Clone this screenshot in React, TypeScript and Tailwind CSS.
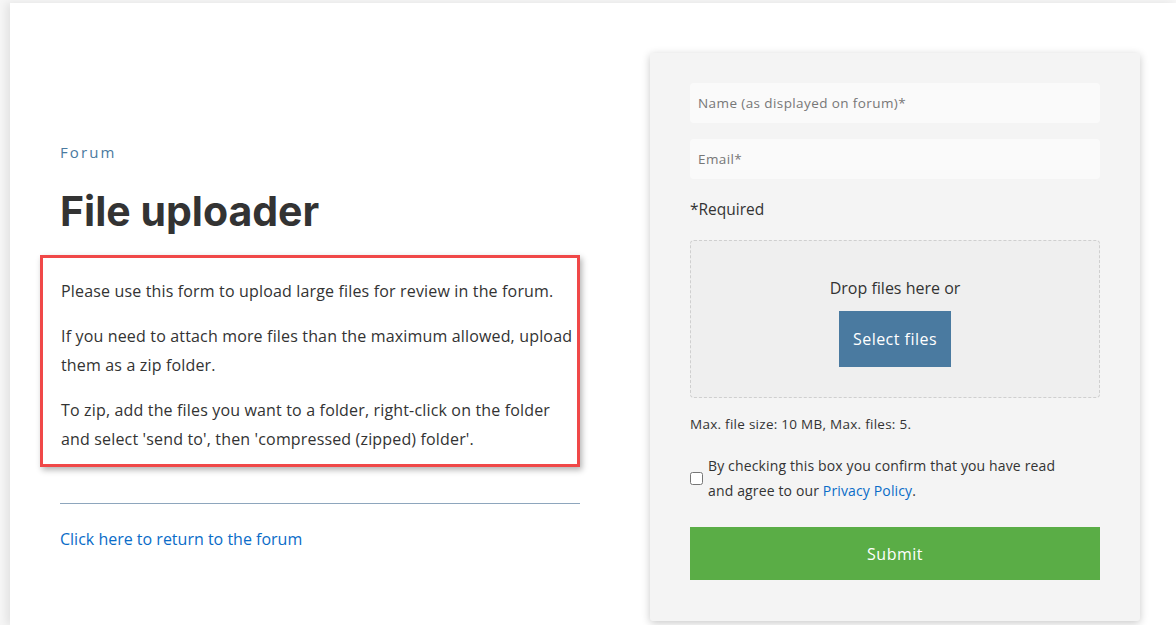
import { useState } from "react";

export default function App() {
  const [agreed, setAgreed] = useState(false);

  return (
    <div className="min-h-screen bg-[#f6f6f6] pt-[3px] pl-[10px] overflow-hidden font-['Open_Sans',sans-serif]">
      <div className="min-h-[622px] bg-white shadow-[-4px_0_8px_rgba(0,0,0,0.08)] flex items-start">
        {/* left column */}
        <div className="w-[640px] shrink-0 pl-[30px] pt-[138px]">
          <div className="pl-[20px] w-[550px]">
            <p className="text-[15px] tracking-[0.14em] text-[#4a7aa0] leading-[22px]">Forum</p>
            <h1 className="mt-[23px] text-[41px] leading-[50px] font-bold text-[#333] font-['Inter',sans-serif]">
              File uploader
            </h1>
          </div>

          <div className="mt-[19px] w-[540px] border-[3px] border-[#f04848] shadow-[2px_3px_6px_rgba(0,0,0,0.3)] pl-[18px] pr-1 pt-[19px] pb-[10px] text-[16px] leading-[29px] tracking-[0.01em] text-[#333] flex flex-col gap-[16px]">
            <p>Please use this form to upload large files for review in the forum.</p>
            <p>If you need to attach more files than the maximum allowed, upload them as a zip folder.</p>
            <p>To zip, add the files you want to a folder, right-click on the folder and select 'send to', then 'compressed (zipped) folder'.</p>
          </div>

          <div className="ml-[20px] w-[520px] mt-[36px] border-t border-[#8ea6bd]" />
          <a href="#" className="ml-[20px] mt-[24px] block text-[16px] leading-[22px] text-[#0a6cc8]">
            Click here to return to the forum
          </a>
        </div>

        {/* form card */}
        <div className="mt-[50px] w-[490px] shrink-0 bg-[#f4f4f4] rounded-[3px] shadow-[0_2px_8px_rgba(0,0,0,0.22)] px-[40px] pt-[30px] pb-[41px] flex flex-col">
          <input
            placeholder="Name (as displayed on forum)*"
            className="h-[40px] rounded-[4px] bg-[#fafafa] px-[8px] text-[13.5px] tracking-[0.03em] text-[#333] placeholder:text-[#777] outline-none"
          />
          <input
            placeholder="Email*"
            className="mt-[16px] h-[40px] rounded-[4px] bg-[#fafafa] px-[8px] text-[13.5px] tracking-[0.03em] text-[#333] placeholder:text-[#777] outline-none"
          />
          <p className="mt-[18px] text-[15.5px] leading-[24px] text-[#333]">*Required</p>

          <div className="mt-[19px] h-[158px] rounded-[4px] border border-dashed border-[#cfcfcf] bg-[#efefef] flex flex-col items-center pt-[35px]">
            <p className="text-[16px] leading-[24px] text-[#333]">Drop files here or</p>
            <button className="mt-[11px] w-[112px] h-[56px] bg-[#4a7aa0] text-white text-[16px] tracking-[0.03em]">
              Select files
            </button>
          </div>

          <p className="mt-[15px] text-[13.5px] tracking-[0.02em] leading-[22px] text-[#333]">Max. file size: 10 MB, Max. files: 5.</p>

          <label className="mt-[18px] flex items-center gap-[5px] cursor-pointer">
            <input
              type="checkbox"
              checked={agreed}
              onChange={(e) => setAgreed(e.target.checked)}
              className="w-[13px] h-[13px] shrink-0"
            />
            <span className="text-[14px] leading-[25px] tracking-[0.01em] text-[#333] pr-[20px]">
              By checking this box you confirm that you have read and agree to our{" "}
              <a href="#" className="text-[#0a6cc8]">Privacy Policy</a>.
            </span>
          </label>

          <button className="mt-[24px] h-[53px] bg-[#5aad46] text-white text-[16px] tracking-[0.03em]">
            Submit
          </button>
        </div>
      </div>
    </div>
  );
}
